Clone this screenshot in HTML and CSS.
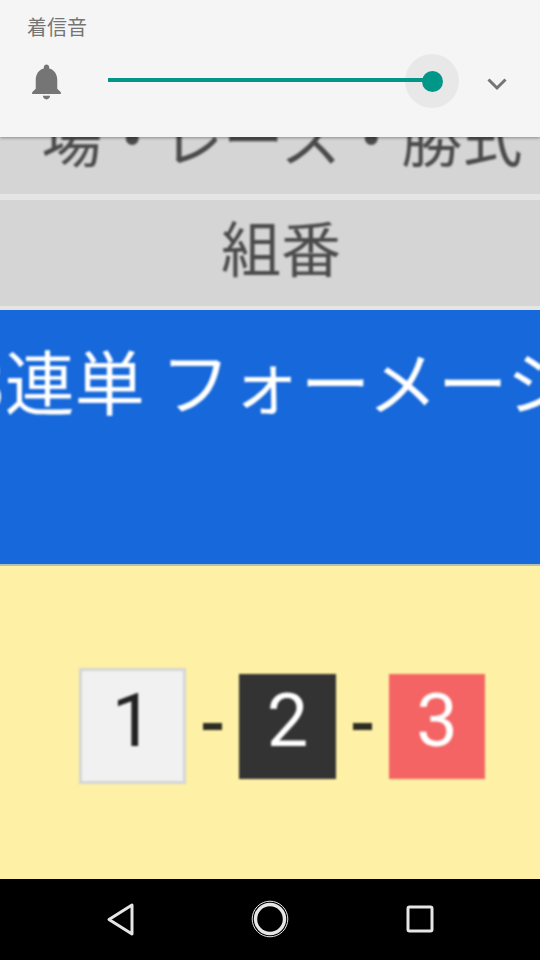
FILE: index.html
```html
<!DOCTYPE html>
<html lang="ja">
<head>
<meta charset="utf-8">
<title>着信音</title>
<link rel="stylesheet" href="styles.css">
</head>
<body>
<div class="screen">
  <main class="page">
    <div class="row row-first"><span>場・レース・勝式</span></div>
    <div class="row row-second"><span>組番</span></div>
    <div class="banner"><span>3連単 フォーメーション</span></div>
    <div class="result">
      <div class="result-inner">
        <span class="num num-white">1</span>
        <span class="dash"></span>
        <span class="num num-black">2</span>
        <span class="dash"></span>
        <span class="num num-red">3</span>
      </div>
    </div>
  </main>
  <nav class="navbar">
    <svg class="nav-back" width="30" height="35" viewBox="0 0 30 35"><path d="M27 3 L4 17.5 L27 32 Z" fill="none" stroke="#e6e6e6" stroke-width="3" stroke-linejoin="round"/></svg>
    <svg class="nav-home" width="38" height="38" viewBox="0 0 38 38"><circle cx="19" cy="19" r="17.8" fill="none" stroke="#e6e6e6" stroke-width="1"/><circle cx="19" cy="19" r="14.5" fill="none" stroke="#e6e6e6" stroke-width="3.4"/></svg>
    <svg class="nav-square" width="28" height="28" viewBox="0 0 28 28"><rect x="2" y="2" width="24" height="24" rx="1.5" fill="none" stroke="#e6e6e6" stroke-width="3"/></svg>
  </nav>
  <section class="volume">
    <div class="volume-label">着信音</div>
    <div class="volume-row">
      <svg class="bell" width="43" height="43" viewBox="0 0 24 24"><path fill="#757575" d="M12 22c1.1 0 2-.9 2-2h-4c0 1.1.9 2 2 2zm6-6v-5c0-3.07-1.63-5.64-4.5-6.32V4c0-.83-.67-1.5-1.5-1.5s-1.5.67-1.5 1.5v.68C7.64 5.36 6 7.92 6 11v5l-2 2v1h16v-1l-2-2z"/></svg>
      <div class="slider">
        <div class="halo"><div class="thumb"></div></div>
        <div class="track"></div>
      </div>
      <svg class="chevron" width="22" height="14" viewBox="0 0 22 14"><path d="M2.5 2.5 L11 11 L19.5 2.5" fill="none" stroke="#757575" stroke-width="3"/></svg>
    </div>
  </section>
</div>
</body>
</html>
```
FILE: styles.css
```css
* { box-sizing: border-box; }
html, body { margin: 0; padding: 0; }
body { width: 540px; height: 960px; overflow: hidden; background: #000; font-family: "Noto Sans CJK JP", "Noto Sans", sans-serif; }
.screen { position: relative; width: 540px; height: 960px; display: flex; flex-direction: column; }

.page { height: 879px; display: flex; flex-direction: column; background: #e5e5e5; overflow: hidden; }
.row { background: #d5d5d5; color: #4a4a4a; display: flex; justify-content: center; align-items: center; white-space: nowrap; overflow: hidden; }
.row span { line-height: 1; filter: blur(1px); flex: none; }
.row-first { height: 194px; padding-top: 79px; padding-left: 24px; font-size: 60.5px; }
.row-second { height: 106px; margin-top: 6px; margin-bottom: 4px; padding-bottom: 14px; padding-left: 22px; font-size: 60px; }
.banner { height: 254px; background: #1768da; color: #fff; font-size: 70px; white-space: nowrap; overflow: hidden; padding-top: 30px; line-height: 80px; }
.banner span { display: block; margin-left: -34px; filter: blur(1px); }
.result { flex: 1; background: #fef0a5; border-top: 2px solid #b4c0b4; display: flex; align-items: center; padding-left: 79px; padding-top: 7px; }
.result-inner { display: flex; align-items: center; filter: blur(0.9px); }
.num { display: flex; align-items: center; justify-content: center; font-family: Roboto, "Noto Sans", sans-serif; font-weight: 400; font-size: 74px; line-height: 1; padding-bottom: 11px; }
.num-white { width: 107px; height: 116px; background: #f1f1f1; border: 3px solid #d5d5d5; color: #222; }
.num-black { width: 97px; height: 105px; background: #333; color: #fff; }
.num-red { width: 96px; height: 105px; background: #f46464; color: #fff; }
.dash { width: 19px; height: 7px; background: #2c2c22; margin: 0 17px; }

.navbar { height: 81px; background: #000; position: relative; display: flex; align-items: center; }
.nav-back { margin-left: 105px; margin-top: -1px; }
.nav-home { margin-left: 116px; margin-top: -1px; }
.nav-square { margin-left: 117px; margin-top: -1px; }

.volume { position: absolute; top: 0; left: 0; width: 540px; height: 137px; background: #f5f5f5; box-shadow: 0 1px 3px rgba(0,0,0,.35); }
.volume-label { position: absolute; left: 27px; top: 12px; font-size: 20px; line-height: 30px; color: #757575; }
.volume-row { position: absolute; left: 0; top: 54px; width: 540px; height: 54px; display: flex; align-items: center; }
.bell { margin-left: 25px; flex: none; }
.slider { position: relative; width: 351px; height: 54px; margin-left: 40px; flex: none; }
.track { position: absolute; left: 0; right: 27px; top: 24px; height: 4px; background: #009688; }
.halo { position: absolute; right: 0; top: 0; width: 54px; height: 54px; border-radius: 50%; background: #e8e8e8; display: flex; align-items: center; justify-content: center; }
.thumb { width: 21px; height: 21px; border-radius: 50%; background: #009688; }
.chevron { margin-left: 27px; margin-top: 6px; flex: none; }
```
